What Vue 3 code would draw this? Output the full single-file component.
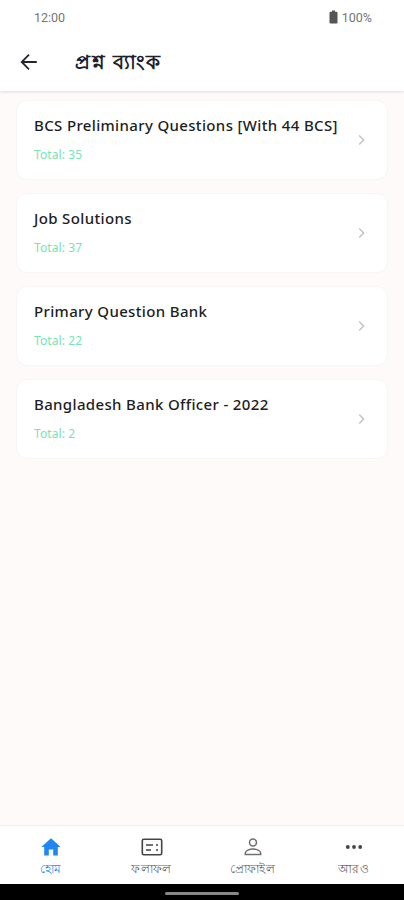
<script setup>
import { ref } from "vue";

const banks = ref([
  { id: 1, title: "BCS Preliminary Questions [With 44 BCS]", total: 35 },
  { id: 2, title: "Job Solutions", total: 37 },
  { id: 3, title: "Primary Question Bank", total: 22 },
  { id: 4, title: "Bangladesh Bank Officer - 2022", total: 2 },
]);

const tabs = [
  { key: "home", label: "হোম" },
  { key: "result", label: "ফলাফল" },
  { key: "profile", label: "প্রোফাইল" },
  { key: "more", label: "আরও" },
];

const activeTab = ref("home");
</script>

<template>
  <div class="screen">
    <header class="header">
      <div class="status-bar">
        <span>12:00</span>
        <span class="battery">
          <svg width="9" height="14" viewBox="0 0 9 14">
            <path d="M3 0.5h3v1.2h1.5q1 0 1 1v9.8q0 1-1 1h-6q-1 0-1-1V2.7q0-1 1-1H3z" fill="#555" />
          </svg>
          100%
        </span>
      </div>
      <div class="app-bar">
        <button class="back" aria-label="Back">
          <svg width="18" height="18" viewBox="0 0 18 18">
            <path d="M16.8 9H2M9 1.7L1.7 9L9 16.3" fill="none" stroke="#25252d" stroke-width="1.8" />
          </svg>
        </button>
        <h1>প্রশ্ন ব্যাংক</h1>
      </div>
    </header>

    <main class="list">
      <div v-for="bank in banks" :key="bank.id" class="card">
        <div class="card-text">
          <div class="card-title">{{ bank.title }}</div>
          <div class="card-total">Total: {{ bank.total }}</div>
        </div>
        <svg class="chevron" width="7" height="12" viewBox="0 0 7 12">
          <path d="M1.2 1.5L5.6 6L1.2 10.5" fill="none" stroke="#c4c4c4" stroke-width="1.5" />
        </svg>
      </div>
    </main>

    <nav class="tab-bar">
      <button
        v-for="tab in tabs"
        :key="tab.key"
        class="tab"
        :class="{ active: activeTab === tab.key }"
        @click="activeTab = tab.key"
      >
        <svg width="24" height="24" viewBox="0 0 24 24">
          <path
            v-if="tab.key === 'home'"
            d="M9.8 20.5v-6h4.4v6h4.6v-8.4h2.8L12 3.2L2.4 12.1h2.8v8.4z"
            fill="currentColor"
          />
          <g v-else-if="tab.key === 'result'" fill="none" stroke="#444" stroke-width="1.6">
            <rect x="2.3" y="4.3" width="19.4" height="15.4" rx="1.5" />
            <path d="M6 10h7M6 15h5M16 10h2M16 15h2" />
          </g>
          <g v-else-if="tab.key === 'profile'" fill="none" stroke="#707070" stroke-width="1.5">
            <circle cx="12" cy="7.6" r="3.5" />
            <path d="M4.3 19.5v-1.4c0-2.4 4.3-4.1 7.7-4.1s7.7 1.7 7.7 4.1v1.4z" />
          </g>
          <g v-else fill="#444">
            <circle cx="5.8" cy="12" r="1.9" />
            <circle cx="12" cy="12" r="1.9" />
            <circle cx="18.2" cy="12" r="1.9" />
          </g>
        </svg>
        <span>{{ tab.label }}</span>
      </button>
    </nav>

    <div class="gesture-bar">
      <div class="handle"></div>
    </div>
  </div>
</template>

<style>
body {
  margin: 0;
  background: #fdfaf9;
}
</style>

<style scoped>
.screen {
  display: flex;
  flex-direction: column;
  height: 900px;
  overflow: hidden;
  background: #fdfaf9;
  font-family: "Noto Sans", "Open Sans", sans-serif;
}

button {
  padding: 0;
  border: none;
  background: none;
  font-family: inherit;
  cursor: pointer;
}

.header {
  flex: none;
  height: 91px;
  background: #fff;
  box-shadow: 0 1px 3px rgba(0, 0, 0, 0.12);
}

.status-bar {
  display: flex;
  justify-content: space-between;
  align-items: center;
  height: 34px;
  padding: 0 32px 0 34px;
  color: #757575;
  font-family: Roboto, sans-serif;
  font-size: 12.5px;
}

.battery {
  display: flex;
  align-items: center;
  gap: 4px;
}

.app-bar {
  display: flex;
  align-items: center;
  height: 56px;
  padding-left: 20px;
}

.back {
  display: flex;
  width: 18px;
  height: 18px;
}

h1 {
  margin: 0 0 1px 37px;
  color: #20202a;
  font-size: 20px;
  font-weight: 600;
  letter-spacing: 1.5px;
  line-height: 28px;
  white-space: nowrap;
}

.list {
  display: flex;
  flex: 1;
  flex-direction: column;
  gap: 13px;
  padding: 9px 16px;
}

.card {
  display: flex;
  justify-content: space-between;
  align-items: center;
  box-sizing: border-box;
  height: 80px;
  padding: 0 22px 0 17px;
  border: 1px solid #f8f5f4;
  border-radius: 11px;
  background: #fff;
}

.card-text {
  margin-top: -2px;
  white-space: nowrap;
}

.card-title {
  color: #1d1d25;
  font-size: 15px;
  font-weight: 500;
  letter-spacing: 0.35px;
  line-height: 22px;
}

.card-total {
  margin-top: 10px;
  color: #76e4b5;
  font-size: 12px;
  letter-spacing: 0.1px;
  line-height: 18px;
}

.chevron {
  flex: none;
}

.tab-bar {
  display: flex;
  flex: none;
  box-sizing: border-box;
  height: 59px;
  border-top: 1px solid #f0eeed;
  background: #fff;
}

.tab {
  display: flex;
  flex: 1;
  flex-direction: column;
  align-items: center;
  padding-top: 9px;
  color: #666;
  font-size: 12.2px;
  letter-spacing: 0.4px;
  line-height: 18px;
}

.tab svg {
  margin-bottom: 1px;
}

.tab.active {
  color: #1e88f0;
}

.gesture-bar {
  display: flex;
  flex: none;
  justify-content: center;
  align-items: center;
  height: 16px;
  padding-top: 2px;
  box-sizing: border-box;
  background: #000;
}

.handle {
  width: 74px;
  height: 3px;
  border-radius: 2px;
  background: #888;
}
</style>
